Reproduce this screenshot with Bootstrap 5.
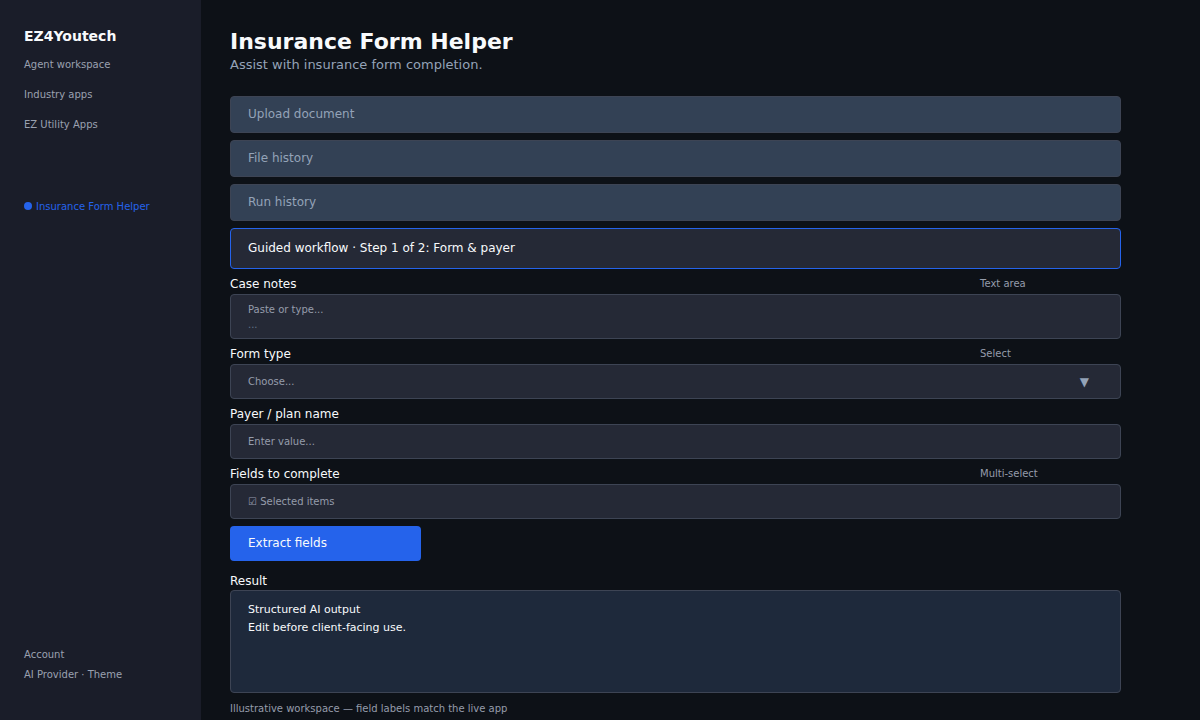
<!DOCTYPE html>
<html lang="en">
<head>
    <meta charset="UTF-8">
    <meta name="viewport" content="width=device-width, initial-scale=1.0">
    <title>Insurance Form Helper</title>
    <link href="https://cdn.jsdelivr.net/npm/bootstrap@5.3.0/dist/css/bootstrap.min.css" rel="stylesheet">
    <style>
        html, body {
            height: 720px;
            overflow: hidden;
        }
        body {
            background-color: #0d1117;
            font-family: "DejaVu Sans", sans-serif;
            color: #f8fafc;
        }
        .side-panel {
            width: 201px;
            height: 720px;
            background-color: #1a1d29;
            padding: 27px 0 0 24px;
        }
        .brand-name {
            font-size: 14px;
            font-weight: 700;
            line-height: 18px;
            margin-bottom: 14px;
        }
        .side-link {
            font-size: 10px;
            line-height: 12px;
            color: #9aa1b0;
            margin-bottom: 18px;
        }
        .side-active {
            color: #2563eb;
            margin-top: 52px;
        }
        .side-dot {
            display: inline-block;
            width: 8px;
            height: 8px;
            border-radius: 50%;
            background-color: #2563eb;
            margin-right: 4px;
        }
        .side-foot {
            margin-top: auto;
            padding-bottom: 39px;
        }
        .side-foot .side-link {
            margin-bottom: 8px;
        }
        .side-foot .side-link:last-child {
            margin-bottom: 0;
        }
        .work-area {
            width: 891px;
            margin-left: 29px;
            padding-top: 28px;
        }
        .page-title {
            font-size: 22px;
            font-weight: 700;
            line-height: 27px;
            margin: 0;
        }
        .page-sub {
            font-size: 13px;
            line-height: 18px;
            color: #94a3b8;
            margin: 1px 0 22px;
        }
        .panel-box {
            border: 1px solid #3d4454;
            border-radius: 4px;
            padding-left: 17px;
        }
        .collapse-bar {
            height: 37px;
            background-color: #334155;
            font-size: 12px;
            color: #94a3b8;
            margin-bottom: 7px;
            padding-bottom: 2px;
        }
        .step-bar {
            height: 41px;
            background-color: #252936;
            border-color: #2563eb;
            font-size: 12px;
            color: #f8fafc;
            padding-bottom: 2px;
        }
        .field-head {
            font-size: 12px;
            line-height: 15px;
            height: 15px;
            margin-top: 8px;
            margin-bottom: 2px;
        }
        .result-head {
            margin-top: 13px;
            margin-bottom: 1px;
        }
        .field-hint {
            font-size: 10px;
            line-height: 12px;
            color: #959cab;
            width: 141px;
            margin-top: 1px;
        }
        .field-box {
            height: 35px;
            background-color: #252936;
            font-size: 10px;
            color: #959cab;
        }
        .notes-box {
            height: 45px;
            line-height: 16px;
            padding-top: 7px;
        }
        .notes-dots {
            color: #64748b;
            margin-top: -1px;
        }
        .select-arrow {
            font-size: 12px;
            color: #94a3b8;
            margin-right: 31px;
        }
        .extract-btn {
            width: 191px;
            height: 35px;
            margin-top: 7px;
            padding: 0 0 2px 18px;
            border: 0;
            border-radius: 4px;
            background-color: #2563eb;
            font-size: 12px;
            color: #f8fafc;
        }
        .result-box {
            height: 103px;
            background-color: #1e293b;
            font-size: 11px;
            line-height: 18px;
            padding-top: 10px;
            color: #f8fafc;
        }
        .foot-note {
            font-size: 10px;
            line-height: 12px;
            color: #959cab;
            margin: 10px 0 0;
        }
    </style>
</head>
<body>
    <div class="d-flex">
        <!-- Sidebar -->
        <nav class="side-panel d-flex flex-column flex-shrink-0">
            <div class="brand-name">EZ4Youtech</div>
            <div class="side-link">Agent workspace</div>
            <div class="side-link">Industry apps</div>
            <div class="side-link">EZ Utility Apps</div>
            <div class="side-link side-active"><span class="side-dot"></span>Insurance Form Helper</div>
            <div class="side-foot">
                <div class="side-link">Account</div>
                <div class="side-link">AI Provider · Theme</div>
            </div>
        </nav>

        <!-- Main -->
        <main class="work-area">
            <h1 class="page-title">Insurance Form Helper</h1>
            <p class="page-sub">Assist with insurance form completion.</p>

            <div class="panel-box collapse-bar d-flex align-items-center">Upload document</div>
            <div class="panel-box collapse-bar d-flex align-items-center">File history</div>
            <div class="panel-box collapse-bar d-flex align-items-center">Run history</div>
            <div class="panel-box step-bar d-flex align-items-center">Guided workflow · Step 1 of 2: Form &amp; payer</div>

            <div class="field-head d-flex justify-content-between">
                <span>Case notes</span><span class="field-hint">Text area</span>
            </div>
            <div class="panel-box field-box notes-box">
                <div>Paste or type...</div>
                <div class="notes-dots">...</div>
            </div>

            <div class="field-head d-flex justify-content-between">
                <span>Form type</span><span class="field-hint">Select</span>
            </div>
            <div class="panel-box field-box d-flex align-items-center justify-content-between">
                <span>Choose...</span><span class="select-arrow">▼</span>
            </div>

            <div class="field-head">Payer / plan name</div>
            <div class="panel-box field-box d-flex align-items-center">Enter value...</div>

            <div class="field-head d-flex justify-content-between">
                <span>Fields to complete</span><span class="field-hint">Multi-select</span>
            </div>
            <div class="panel-box field-box d-flex align-items-center">☑ Selected items</div>

            <button class="extract-btn btn d-block text-start">Extract fields</button>

            <div class="field-head result-head">Result</div>
            <div class="panel-box result-box">
                <div>Structured AI output</div>
                <div>Edit before client-facing use.</div>
            </div>
            <p class="foot-note">Illustrative workspace — field labels match the live app</p>
        </main>
    </div>

    <script src="https://cdn.jsdelivr.net/npm/bootstrap@5.3.0/dist/js/bootstrap.bundle.min.js"></script>
</body>
</html>
